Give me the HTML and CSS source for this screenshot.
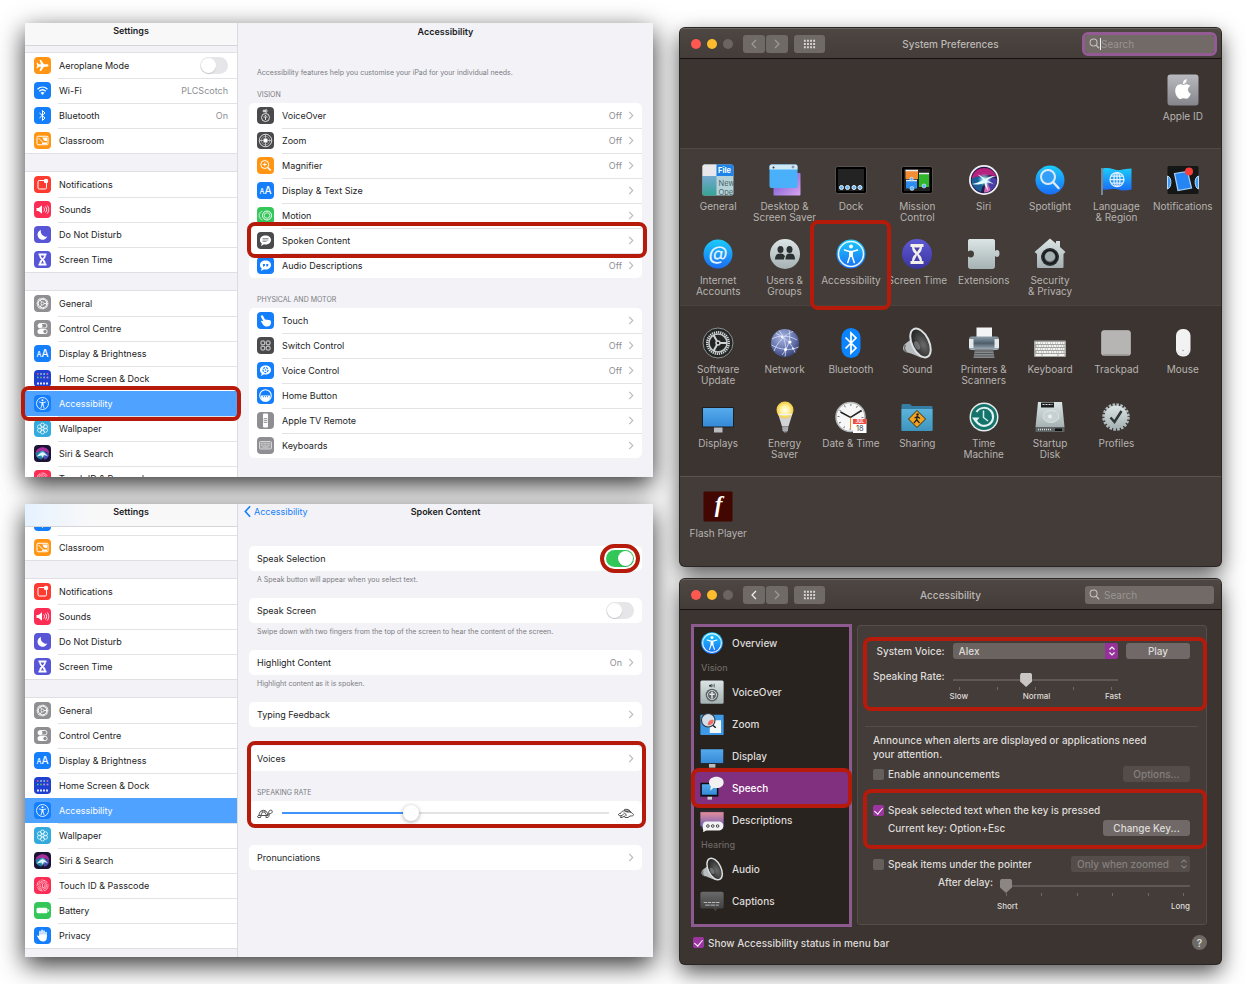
FILE: index.html
```html
<!DOCTYPE html>
<html lang="en">
<head>
    <meta charset="UTF-8">
    <meta name="viewport" content="width=device-width, initial-scale=1.0">
    <title>Spoken Content settings</title>
    <link rel="stylesheet" href="styles.css">
</head>
<body>
    <!-- Icon sprite -->
    <svg class="sprite" aria-hidden="true">
        <defs>
            <linearGradient id="gBlue" x1="0" y1="0" x2="0" y2="1"><stop offset="0" stop-color="#1ccbfb"/><stop offset="1" stop-color="#1a6df5"/></linearGradient>
            <linearGradient id="gSilver" x1="0" y1="0" x2="0" y2="1"><stop offset="0" stop-color="#dce5e6"/><stop offset="1" stop-color="#a5b1b2"/></linearGradient>
            <linearGradient id="gPurple" x1="0" y1="0" x2="0" y2="1"><stop offset="0" stop-color="#5e5ad6"/><stop offset="1" stop-color="#3b349f"/></linearGradient>
            <linearGradient id="gScreen" x1="0" y1="0" x2="0" y2="1"><stop offset="0" stop-color="#56abec"/><stop offset="1" stop-color="#348ad8"/></linearGradient>
            <linearGradient id="gTeal" x1="0" y1="0" x2="0" y2="1"><stop offset="0" stop-color="#74a9d0"/><stop offset="1" stop-color="#38a295"/></linearGradient>
            <linearGradient id="gGrey" x1="0" y1="0" x2="0" y2="1"><stop offset="0" stop-color="#b9babf"/><stop offset="1" stop-color="#85858b"/></linearGradient>
            <linearGradient id="gViolet" x1="0" y1="0" x2="1" y2="1"><stop offset="0" stop-color="#6a4fd0"/><stop offset="1" stop-color="#d9a5ee"/></linearGradient>
            <linearGradient id="gDusk" x1="0" y1="0" x2="0" y2="1"><stop offset="0" stop-color="#e58c9b"/><stop offset="1" stop-color="#6f63b8"/></linearGradient>
            <linearGradient id="gDark" x1="0" y1="0" x2="0" y2="1"><stop offset="0" stop-color="#6a6a6a"/><stop offset="1" stop-color="#3b3b3b"/></linearGradient>
            <linearGradient id="gFolder" x1="0" y1="0" x2="0" y2="1"><stop offset="0" stop-color="#5cb4dc"/><stop offset="1" stop-color="#3e94bd"/></linearGradient>
            <linearGradient id="gPrinter" x1="0" y1="0" x2="0" y2="1"><stop offset="0" stop-color="#8fa0ad"/><stop offset=".5" stop-color="#4e5d6b"/><stop offset="1" stop-color="#a9b6c0"/></linearGradient>
            <radialGradient id="gNet" cx=".4" cy=".3" r=".8"><stop offset="0" stop-color="#a9b6e0"/><stop offset=".6" stop-color="#5f6ea8"/><stop offset="1" stop-color="#2f3865"/></radialGradient>
            <radialGradient id="gCone" cx=".6" cy=".6" r=".7"><stop offset="0" stop-color="#6b6b6b"/><stop offset="1" stop-color="#161616"/></radialGradient>
            <radialGradient id="gBulb"><stop offset="0" stop-color="#fffef0"/><stop offset=".5" stop-color="#fff3a0"/><stop offset="1" stop-color="#f3c93d"/></radialGradient>
            <radialGradient id="gGlow"><stop offset="0" stop-color="#fff"/><stop offset=".4" stop-color="#b5f1fb" stop-opacity=".7"/><stop offset="1" stop-color="#4cc3dd" stop-opacity="0"/></radialGradient>
        </defs>

        <!-- iPad glyphs -->
        <symbol id="plane" viewBox="0 0 34 34"><path fill="#fff" d="M29 17c0-1.600-2-2.400-4-2.400h-5L14 6h-3l3 8.600H9.500L7 11.500H5L6.500 17 5 22.500h2l2.500-3.100H14L11 28h3l6-8.600h5c2 0 4-.8 4-2.400z"/></symbol>
        <symbol id="wifi" viewBox="0 0 34 34"><g fill="none" stroke="#fff" stroke-width="2.500"><path d="M7 14.500c6-5.500 14-5.500 20 0M10.500 18.500c4-3.700 9-3.700 13 0"/></g><path fill="#fff" d="M17 26l-4-4.300c2.300-2 5.700-2 8 0z"/></symbol>
        <symbol id="bt" viewBox="0 0 34 34"><path fill="none" stroke="#fff" stroke-width="2" d="M11 12l11 10-5 5V7l5 5-11 10"/></symbol>
        <symbol id="classroom" viewBox="0 0 34 34"><rect x="6" y="8.500" width="22" height="17" rx="2" fill="none" stroke="#fff" stroke-width="2"/><path d="M9 12l8 8" stroke="#fff" stroke-width="2"/><path d="M17 11h9v7h-4l-3-2zM16 21h10v3H16z" fill="#fff"/></symbol>
        <symbol id="notif" viewBox="0 0 34 34"><path d="M20 9H10.500A2.500 2.500 0 0 0 8 11.500v12a2.500 2.500 0 0 0 2.500 2.500h12a2.500 2.500 0 0 0 2.500-2.500V14" fill="none" stroke="#fff" stroke-width="2"/><circle cx="24" cy="10" r="4.500" fill="#fff"/></symbol>
        <symbol id="sounds" viewBox="0 0 34 34"><path fill="#fff" d="M5 14h4l7-5.500v17L9 20H5z"/><path d="M19.500 13c2 2.500 2 5.500 0 8M23 11c3 4 3 8 0 12M26.500 9c4 5 4 11 0 16" fill="none" stroke="#fff" stroke-width="1.800"/></symbol>
        <symbol id="moon" viewBox="0 0 34 34"><path fill="#fff" d="M14 8a10 10 0 1 0 12.500 13A10.500 10.500 0 0 1 14 8z"/></symbol>
        <symbol id="hourglass" viewBox="0 0 34 34"><path fill="#fff" d="M9 5h16v3.500h-1.500c0 4-1.500 6.500-4.500 8.500 3 2 4.500 4.500 4.500 8.500H25V29H9v-3.500h1.500c0-4 1.500-6.500 4.500-8.500-3-2-4.500-4.500-4.500-8.500H9z"/><path fill="#5856d6" d="M13.500 9h7c-.5 2.500-1.500 4-3.500 5.500-2-1.500-3-3-3.500-5.500zM17 19l3 6h-6z"/></symbol>
        <symbol id="gear" viewBox="0 0 34 34"><circle cx="17" cy="17" r="10.500" fill="none" stroke="#fff" stroke-width="2.500" stroke-dasharray="1.800 .8"/><circle cx="17" cy="17" r="8.500" fill="none" stroke="#fff" stroke-width="2"/><path d="M17 17h8M17 17l-4.500-7M17 17l-4.500 7" stroke="#fff" stroke-width="1.800"/><circle cx="17" cy="17" r="3" fill="#8e8e93" stroke="#fff" stroke-width="1.500"/></symbol>
        <symbol id="control" viewBox="0 0 34 34"><rect x="8" y="7" width="18" height="9" rx="4.500" fill="none" stroke="#fff" stroke-width="1.800"/><circle cx="12.500" cy="11.500" r="4.500" fill="#fff"/><rect x="7" y="18" width="20" height="10" rx="5" fill="#fff"/><circle cx="22" cy="23" r="3.300" fill="#8e8e93"/></symbol>
        <symbol id="aa" viewBox="0 0 34 34"><text x="5" y="24" fill="#fff" font-family="Inter, sans-serif" font-size="14" font-weight="500">A</text><text x="15" y="24" fill="#fff" font-family="Inter, sans-serif" font-size="20" font-weight="500">A</text></symbol>
        <symbol id="homescreen" viewBox="0 0 34 34"><g fill="none" stroke-width="3" stroke-dasharray="3 3.500"><path d="M6 8h23" stroke="#ff5c6b"/><path d="M12.500 8h14" stroke="#5ad3ff"/><path d="M6 15h23" stroke="#58d26b"/><path d="M19 15h10" stroke="#d57bff"/></g><path d="M6 27h23" stroke="#dfe6ff" stroke-width="4" stroke-dasharray="4 2"/></symbol>
        <symbol id="access" viewBox="0 0 34 34"><circle cx="17" cy="17" r="12" fill="none" stroke="#fff" stroke-width="1.700"/><circle cx="17" cy="10.500" r="2" fill="#fff"/><path d="M10.500 14l4.500 1h4l4.500-1M17 15v5M15.700 16v4L14 25.500M18.300 16v4L20 25.500" stroke="#fff" stroke-width="1.700" fill="none" stroke-linecap="round"/></symbol>
        <symbol id="wallpaper" viewBox="0 0 34 34"><g fill="none" stroke="#e6f8ff" stroke-width="1.700"><circle cx="17" cy="17" r="3"/><circle cx="17" cy="10" r="4"/><circle cx="17" cy="24" r="4"/><circle cx="11" cy="13.500" r="4"/><circle cx="23" cy="13.500" r="4"/><circle cx="11" cy="20.500" r="4"/><circle cx="23" cy="20.500" r="4"/></g></symbol>
        <symbol id="siri" viewBox="0 0 34 34"><rect width="34" height="34" fill="#1b1437"/><path d="M3 17C4 7 15 2 24 6c5 3 7 7 6 12-7-7-16-8-27-1z" fill="#a8309c"/><path d="M3 17c8-6 16-6 20-3l-8 15C8 28 3 23 3 17z" fill="#1f7da3"/><path d="M20 14c6 0 10 3 10 7-2 5-6 8-10 8z" fill="#4450b8"/><circle cx="17" cy="18" r="8" fill="url(#gGlow)"/><path d="M5 24c4-6 8-8 12-9 5 1 8 4 11 8-4-3-7-3-9-3l-1 8-2-7c-4 0-7 1-11 3z" fill="#e2faff"/></symbol>
        <symbol id="finger" viewBox="0 0 34 34"><g fill="none" stroke="#ffc4ce" stroke-width="1.800"><circle cx="17" cy="17" r="11" stroke-dasharray="14 2"/><circle cx="17" cy="17" r="8" stroke-dasharray="11 2"/><circle cx="17" cy="17" r="5" stroke-dasharray="8 1.500"/><path d="M17 14v7"/></g></symbol>
        <symbol id="battery" viewBox="0 0 34 34"><rect x="5" y="11.500" width="22" height="11" rx="3" fill="#fff"/><path d="M29 15v4" stroke="#fff" stroke-width="2.500"/></symbol>
        <symbol id="hand" viewBox="0 0 34 34"><path d="M12 18V9M16 17V6.500M20 17V8M24 19v-8" stroke="#fff" stroke-width="3" stroke-linecap="round"/><path fill="#fff" d="M10.500 15h15v7c0 4-3 7-7 7-5 0-7-2-9.500-6L6 18c1-1.500 3-1 4.500 1z"/></symbol>
        <symbol id="voiceover" viewBox="0 0 34 34"><path d="M12 6h4l3-2v8l-3-2h-4zM21 6v4" fill="#ddd" stroke="#bbb"/><circle cx="17" cy="21" r="8" fill="none" stroke="#ddd" stroke-width="2"/><circle cx="17" cy="17" r="1.500" fill="#ddd"/><path d="M13 20h8M17 20v6" stroke="#ddd" stroke-width="2"/></symbol>
        <symbol id="zoom" viewBox="0 0 34 34"><circle cx="17" cy="17" r="12.500" fill="none" stroke="#ddd" stroke-width="2"/><circle cx="17" cy="17" r="8.500" fill="none" stroke="#aaa" stroke-width="1.500"/><path d="M17 5v8M17 21v8M5 17h8M21 17h8" stroke="#ccc" stroke-width="1.800"/><rect x="13" y="13" width="8" height="8" rx="1" fill="#fff"/></symbol>
        <symbol id="magnifier" viewBox="0 0 34 34"><circle cx="15.500" cy="15" r="8" fill="none" stroke="#fff" stroke-width="2"/><path d="M21.500 21l6 6" stroke="#fff" stroke-width="3"/><path d="M11.500 15h8M15.500 11v8" stroke="#fff" stroke-width="1.800"/></symbol>
        <symbol id="motion" viewBox="0 0 34 34"><g fill="none" stroke="#fff"><circle cx="20" cy="17" r="9" stroke-width="2"/><circle cx="20" cy="17" r="5.500" stroke-width="1.500"/><path d="M11 26c-8-3-8-15 0-18" opacity=".7" stroke-width="1.700"/><path d="M7 25c-6-4-6-12 0-16" opacity=".4" stroke-width="1.500"/></g></symbol>
        <symbol id="spoken" viewBox="0 0 34 34"><path fill="#fff" d="M17 7c6.600 0 11 4 11 9s-4.400 9-11 9c-1 0-2 0-3-.3L8 28l1.500-5.500C7 21 6 19 6 16c0-5 4.400-9 11-9z"/><path d="M11 13h12M11 16h12M11 19h8" stroke="#777" stroke-width="1.500"/></symbol>
        <symbol id="audiodesc" viewBox="0 0 34 34"><path fill="#fff" d="M17 7c6.600 0 11 4 11 9s-4.400 9-11 9c-1 0-2 0-3-.3L8 28l1.500-5.500C7 21 6 19 6 16c0-5 4.400-9 11-9z"/><path d="M12 14h4v3l-2 2h-2zM18.500 14h4v3l-2 2h-2z" fill="#147efb"/></symbol>
        <symbol id="touch" viewBox="0 0 34 34"><path fill="#fff" d="M9 7c2-1 3 .5 4 2.500l3 5.500 8 1c3 .5 4 2 4 5 0 5-3 8-8 8-4 0-6-1-8-4l-4-6c0-2 2-2 4-.5l1 .5-5-9c-.6-1.200-.3-2.500 1-3z"/></symbol>
        <symbol id="switch" viewBox="0 0 34 34"><g fill="none" stroke="#ddd" stroke-width="2"><rect x="8" y="8" width="7.500" height="7.500" rx="1.500"/><rect x="18.500" y="8" width="7.500" height="7.500" rx="1.500"/><rect x="8" y="18.500" width="7.500" height="7.500" rx="1.500"/><rect x="18.500" y="18.500" width="7.500" height="7.500" rx="1.500"/></g></symbol>
        <symbol id="voicecontrol" viewBox="0 0 34 34"><path fill="#fff" d="M17 7c6.600 0 11 4 11 9s-4.400 9-11 9c-1 0-2 0-3-.3L8 28l1.500-5.500C7 21 6 19 6 16c0-5 4.400-9 11-9z"/><circle cx="17" cy="16" r="5" fill="none" stroke="#147efb" stroke-width="2.500" stroke-dasharray="4 2"/><circle cx="17" cy="16" r="1.500" fill="#147efb"/></symbol>
        <symbol id="homebutton" viewBox="0 0 34 34"><circle cx="17" cy="17" r="11.500" fill="none" stroke="#fff" stroke-width="2.200"/><path d="M8 17h18v3a9 9 0 0 1-18 0z" fill="#fff"/><path d="M12 19.500h2M16 19.500h2M20 19.500h2" stroke="#147efb" stroke-width="2"/></symbol>
        <symbol id="remote" viewBox="0 0 34 34"><rect x="12" y="3" width="10" height="28" rx="2" fill="#fff"/><rect x="13.500" y="12" width="7" height="10" fill="#a2a2a6"/><path d="M14 15h6M14 19h6" stroke="#fff" stroke-width="1.500"/></symbol>
        <symbol id="keyboard" viewBox="0 0 34 34"><rect x="5" y="9" width="24" height="15" rx="2" fill="#a2a2a6" stroke="#e2e2e2" stroke-width="1.700"/><path d="M8 13h18M8 16.500h18" stroke="#e2e2e2" stroke-width="1.500" stroke-dasharray="1.800 1"/><path d="M11 20h12" stroke="#e2e2e2" stroke-width="1.500"/></symbol>
        <symbol id="chev" viewBox="0 0 6 10"><path d="M1 1l4 4-4 4" fill="none" stroke="currentColor" stroke-width="1.200"/></symbol>
        <symbol id="turtle" viewBox="0 0 32 20"><g fill="none" stroke="#333" stroke-width="1.700"><path d="M4 14c0-14 17-14 18 0z"/><path d="M8 13l3-6h4l4 6M11 7L9 5M15 7l2-2"/><path d="M22 13c1-3 1-7 3-9 3-2 7 0 5 4-1 2-3 2-5 2-1 5-1 8-5 8h-2v-3M4 14c-3 0-4 3-2 4h5l1-3"/></g></symbol>
        <symbol id="hare" viewBox="0 0 32 20"><g fill="none" stroke="#333" stroke-width="1.700"><path d="M1 12c1-2 2-2 4-2 2-6 10-7 15-3 5-1 9 2 11 5 0 3-3 3-7 3l-4 3h-6l-1-3-5 3H5l2-4c-4 1-6 0-6-2z"/><path d="M20 7c-4 0-8-2-7-5 4-2 8 1 10 5M18 4c-1-3 5-3 8 4M11 9c4 0 6 3 5 6M7 14l4-2"/></g></symbol>

        <!-- System Preferences icons -->
        <symbol id="m-apple" viewBox="0 0 64 64"><rect x="1" y="1" width="62" height="62" rx="6" fill="url(#gGrey)"/><path fill="#fff" d="M44 22c-4-3-8-1-11-.2-4-1.600-8-2-12 .8-7 6-5 18 0 24 4 5.500 7 3 11 2s7 3.500 11-1c2-2.500 4-5 4.500-8-7-3-7.500-13-.5-16zM39 10c-5 1-7.500 5-7 10 5 0 8-5 7-10z"/></symbol>
        <symbol id="m-general" viewBox="0 0 64 64"><rect x="1" y="1" width="62" height="62" rx="4" fill="#b5d2d8"/><rect x="1" y="24" width="28" height="39" fill="url(#gTeal)"/><path d="M5 1h24v23H1V5a4 4 0 0 1 4-4z" fill="#e8e8ec"/><path d="M29 1h30a4 4 0 0 1 4 4v19H29z" fill="#1e83e8"/><g font-family="Inter, sans-serif" font-size="15"><text x="32" y="18" fill="#fff" font-weight="700">File</text><text x="33" y="43" fill="#4d6268">New</text><text x="33" y="62" fill="#4d6268">Ope</text></g></symbol>
        <symbol id="m-desktop" viewBox="0 0 64 64"><rect x="9" y="18" width="54" height="45" rx="2" fill="url(#gViolet)"/><rect x="1" y="1" width="56" height="47" rx="4" fill="#4ab0fa"/><path d="M5 1h48a4 4 0 0 1 4 4v6H1V5a4 4 0 0 1 4-4z" fill="#cfe8f5"/><circle cx="9" cy="7" r="2" fill="#334"/><circle cx="48" cy="6" r="2" fill="none" stroke="#334"/></symbol>
        <symbol id="m-dock" viewBox="0 0 64 64"><rect x="1" y="5" width="62" height="54" rx="4" fill="#000" stroke="#565250" stroke-width="2"/><rect x="6" y="10" width="52" height="44" fill="#232323"/><g fill="#63b4f7" stroke="#e5f3ff" stroke-width="2"><circle cx="13" cy="47" r="4"/><circle cx="25" cy="47" r="4"/><circle cx="38" cy="47" r="4"/><circle cx="50" cy="47" r="4"/></g></symbol>
        <symbol id="m-mission" viewBox="0 0 64 64"><rect x="1" y="5" width="62" height="54" rx="4" fill="#000" stroke="#565250" stroke-width="2"/><rect x="6" y="10" width="52" height="44" fill="#222"/><rect x="9" y="13" width="25" height="17" fill="#f28d33"/><rect x="10" y="33" width="22" height="16" fill="#2d8cf0"/><rect x="36" y="19" width="20" height="27" fill="#2fb62d"/><path d="M9 13h25M10 33h22M36 19h20" stroke="#e9e9e9" stroke-width="3"/><g fill="#63b4f7" stroke="#fff"><circle cx="21" cy="30" r="3.500"/><circle cx="22" cy="49" r="4"/><circle cx="46" cy="44" r="4"/></g></symbol>
        <symbol id="m-siri" viewBox="0 0 64 64"><circle cx="32" cy="32" r="30" fill="#f2f2f4"/><circle cx="32" cy="32" r="26.500" fill="#22194a"/><path d="M8 26C14 4 48 0 57 26 44 20 28 22 8 32z" fill="#b5237f"/><path d="M7 30c12-8 22-6 26 2L26 56C14 52 6 42 7 30z" fill="#1c5f96"/><path d="M34 32c10-8 20-6 24 0-1 12-8 20-16 23z" fill="#4a3fa5"/><path d="M36 32l9 20c-3 4-8 5-13 5z" fill="#d66bb4"/><circle cx="33" cy="32" r="14" fill="url(#gGlow)"/><path d="M8 40c10-2 16-5 23-8-4-5-7-8-12-11 7 2 11 5 15 9 8-5 14-6 22-6-8 2-13 5-18 9 6 2 10 4 14 8-6-3-10-4-15-4 1 7 2 11 4 17-5-6-7-10-8-16-8 3-15 4-25 2z" fill="#dffcff"/></symbol>
        <symbol id="m-spotlight" viewBox="0 0 64 64"><circle cx="32" cy="32" r="29" fill="url(#gBlue)"/><circle cx="28" cy="26" r="14" fill="#329ff9" stroke="#dde9f2" stroke-width="4"/><path d="M38 36l11 12" stroke="#dde9f2" stroke-width="5" stroke-linecap="round"/></symbol>
        <symbol id="m-language" viewBox="0 0 64 64"><path d="M4 8v54" stroke="#8aa0b8" stroke-width="3"/><path d="M6 9c14-4 24 5 34 3 8-2 15-2 23-3v42c-10 2-20 3-27 0-10-3-20 2-30 0z" fill="url(#gBlue)"/><g fill="none" stroke="#e1f0ff" stroke-width="2.500"><circle cx="34" cy="31" r="14"/><ellipse cx="34" cy="31" rx="6" ry="14"/><path d="M34 17v28M20 31h28M22 24h24M22 38h24"/></g></symbol>
        <symbol id="m-notifications" viewBox="0 0 64 64"><rect x="1" y="4" width="62" height="56" rx="3" fill="#151616"/><path d="M1 24c10 3 8 24 0 26zM63 24c-10 3-8 24 0 26z" fill="#3d9bf8" stroke="#b9dcfa" stroke-width="2"/><path d="M15 19l26-4 8 33-27 5z" fill="#2685f4" stroke="#a6cdf3" stroke-width="2.500"/><circle cx="44" cy="15" r="8" fill="#fc3d39"/></symbol>
        <symbol id="m-internet" viewBox="0 0 64 64"><circle cx="32" cy="32" r="29" fill="url(#gBlue)"/><text x="32" y="43" text-anchor="middle" fill="#e4f2ff" font-family="Inter, sans-serif" font-size="38" font-style="italic" font-weight="500">@</text></symbol>
        <symbol id="m-users" viewBox="0 0 64 64"><circle cx="32" cy="32" r="30" fill="url(#gSilver)"/><g fill="#2b3032"><ellipse cx="23" cy="23" rx="6" ry="7"/><ellipse cx="41" cy="23" rx="6" ry="7"/><path d="M12 43c0-9 4-12 11-12 5 0 8 3 9 6-2 2-2 4-2 6zM33 43c0-9 3-12 9-12 7 0 10 3 10 12z"/></g></symbol>
        <symbol id="m-access" viewBox="0 0 64 64"><circle cx="32" cy="32" r="29" fill="url(#gBlue)"/><circle cx="32" cy="32" r="25" fill="none" stroke="#e8f5ff" stroke-width="3"/><circle cx="32" cy="17" r="4" fill="#fff"/><path d="M19 24l10 3h6l10-3M32 27v10M29.500 27v10l-4 12M34.500 27v10l4 12" fill="none" stroke="#fff" stroke-width="3" stroke-linecap="round"/></symbol>
        <symbol id="m-screentime" viewBox="0 0 64 64"><circle cx="32" cy="32" r="30" fill="url(#gPurple)"/><path fill="#f1efe8" d="M19 12h26v6h-3c0 7-3 11-7 14 4 3 7 7 7 14h3v6H19v-6h3c0-7 3-11 7-14-4-3-7-7-7-14h-3z"/><path d="M26 19h12l-6 9zM32 34l6 12H26z" fill="#4640ae"/></symbol>
        <symbol id="m-extensions" viewBox="0 0 64 64"><path fill="url(#gSilver)" d="M4 2h46c3 0 4 2 4 4v20c3-3 9-3 9 5s-6 8-9 5v21c0 3-2 5-5 5H5c-3 0-5-2-5-5V37c4 3 12 3 12-5s-8-8-12-5V6c0-3 2-4 4-4z"/></symbol>
        <symbol id="m-security" viewBox="0 0 64 64"><path fill="url(#gSilver)" d="M32 1l12 10V6h8v12l11 10-4 4v26a2 2 0 0 1-2 2H8a2 2 0 0 1-2-2V32l-5-4z"/><circle cx="32" cy="38" r="18" fill="#2b2e30"/><circle cx="32" cy="38" r="13" fill="#555c60" stroke="#17191a" stroke-width="3"/><circle cx="32" cy="37" r="10" fill="#a3aeb1"/></symbol>
        <symbol id="m-software" viewBox="0 0 64 64"><circle cx="32" cy="32" r="30" fill="#242626" stroke="#8b9090" stroke-width="2"/><circle cx="32" cy="32" r="21.500" fill="none" stroke="#d0d4d4" stroke-width="5" stroke-dasharray="2.500 1.700"/><circle cx="32" cy="32" r="18" fill="none" stroke="#bfc4c4" stroke-width="3"/><path d="M32 32h18M32 32l-9-16M32 32l-9 16" stroke="#d0d4d4" stroke-width="4"/><circle cx="32" cy="32" r="4" fill="#242626" stroke="#d0d4d4" stroke-width="3"/></symbol>
        <symbol id="m-network" viewBox="0 0 64 64"><circle cx="32" cy="32" r="28" fill="url(#gNet)"/><g fill="none" stroke="#dfe6ff" stroke-width="1.500"><path d="M6 24c12-8 34-8 50 2M10 48c8-20 24-34 38-39M20 7c12 14 16 34 12 52M5 36c18 10 38 12 54 4M14 13c16 6 32 20 38 38M40 6c4 12 0 34-14 50"/></g><g fill="#fff"><circle cx="26" cy="20" r="2"/><circle cx="42" cy="30" r="3"/><circle cx="33" cy="45" r="3"/><circle cx="48" cy="43" r="2"/></g></symbol>
        <symbol id="m-bluetooth" viewBox="0 0 64 64"><rect x="13" y="2" width="38" height="60" rx="19" fill="#0a84ff"/><path d="M21 21l21 21-10 10V12l10 10-21 21" fill="none" stroke="#fff" stroke-width="3.500"/></symbol>
        <symbol id="m-sound" viewBox="0 0 64 64"><path d="M24 22C14 30 3 34 4 44c2 7 10 7 16 9l22 9z" fill="#b9bdbf"/><path d="M9 36c-3 4-3 11 2 14" stroke="#6e7375" stroke-width="3" fill="none"/><ellipse cx="39" cy="32" rx="17" ry="31" transform="rotate(-26 39 32)" fill="url(#gCone)" stroke="#dcdedf" stroke-width="4"/><ellipse cx="32" cy="37" rx="5" ry="9" transform="rotate(-26 32 37)" fill="#9aa0a2" opacity=".5"/></symbol>
        <symbol id="m-printer" viewBox="0 0 64 64"><rect x="17" y="1" width="31" height="20" fill="#f3f4f5"/><rect x="2" y="19" width="60" height="27" rx="5" fill="url(#gPrinter)"/><path d="M2 24h9v18H2zM53 24h9v18h-9z" fill="#e3e8eb"/><path d="M14 44h36l3 18H11z" fill="#85898b"/><path d="M14 48h36M13 53h38M12 58h40" stroke="#55595b" stroke-width="2"/></symbol>
        <symbol id="m-keyboard" viewBox="0 0 64 64"><rect x="0" y="27" width="64" height="33" rx="2" fill="#a3a3a2"/><g stroke="#f3f3f2" stroke-width="4"><path d="M3 32h58M5 38h56M3 44h58M5 50h56" stroke-dasharray="4 1"/><path d="M3 56h12M17 56h30M49 56h12"/></g></symbol>
        <symbol id="m-trackpad" viewBox="0 0 64 64"><rect x="3" y="7" width="58" height="50" rx="5" fill="#b6b5b4" stroke="#d0cfce"/><path d="M6 56h52" stroke="#86827f" stroke-width="2"/></symbol>
        <symbol id="m-mouse" viewBox="0 0 64 64"><rect x="18" y="4" width="29" height="55" rx="13" fill="#f2f2f2"/><path d="M20 46c3 12 21 12 25 0" fill="none" stroke="#e2e2e2" stroke-width="2"/><circle cx="32" cy="47" r="1.500" fill="#999"/></symbol>
        <symbol id="m-display" viewBox="0 0 64 64"><path d="M24 50h17v13H24z" fill="#b9bdc0"/><rect x="0" y="12" width="64" height="41" rx="2" fill="#1d1f21"/><rect x="2" y="14" width="60" height="37" fill="url(#gScreen)"/></symbol>
        <symbol id="m-energy" viewBox="0 0 64 64"><path d="M18 25l8 26h13l8-26z" fill="#d2d3d6"/><circle cx="32" cy="18" r="17" fill="url(#gBulb)"/><path d="M19 27h27" stroke="#f1f1f1" stroke-width="3"/><path d="M27 51h11v8l-3 4h-5l-3-4z" fill="#8b8e92"/><path d="M26 54h13M27 58h11" stroke="#d8dadc" stroke-width="1.500"/></symbol>
        <symbol id="m-date" viewBox="0 0 64 64"><circle cx="31" cy="32" r="29" fill="#f7f7f7" stroke="#b4b7b9" stroke-width="3"/><circle cx="31" cy="32" r="24" fill="none" stroke="#555" stroke-width="4" stroke-dasharray="1.500 11"/><path d="M11 22l20 11 22-14" fill="none" stroke="#222" stroke-width="3"/><path d="M31 33v22" stroke="#f58b1f" stroke-width="2"/><rect x="36" y="36" width="27" height="28" fill="#fff"/><rect x="36" y="36" width="27" height="10" fill="#f04a42"/><text x="49.500" y="44" text-anchor="middle" fill="#fff" font-family="Inter, sans-serif" font-size="9" font-weight="700">JUL</text><text x="49.500" y="60" text-anchor="middle" fill="#444" font-family="Inter, sans-serif" font-size="15">18</text></symbol>
        <symbol id="m-sharing" viewBox="0 0 64 64"><path d="M1 9c0-2 1-3 3-3h14l4 4h38c2 0 3 1 3 3v44c0 2-1 3-3 3H4c-2 0-3-1-3-3z" fill="#357fa5"/><path d="M1 16h62v41c0 2-1 3-3 3H4c-2 0-3-1-3-3z" fill="url(#gFolder)"/><path d="M32 19l17 17-17 17-17-17z" fill="#f5a51d" stroke="#3a2b0c" stroke-width="2"/><circle cx="33" cy="27" r="2.500" fill="#222"/><path d="M33 30l-2 8-5 6M31 37l6 7M27 34l6-3 5 4" stroke="#222" stroke-width="2.500" fill="none"/></symbol>
        <symbol id="m-timemachine" viewBox="0 0 64 64"><circle cx="32" cy="32" r="29" fill="#e8eeed"/><circle cx="32" cy="32" r="26" fill="#14746c"/><path d="M15 37a18 18 0 1 0 2-15" fill="none" stroke="#e4f3f1" stroke-width="4"/><path d="M8 33h15l-8 10z" fill="#e4f3f1"/><path d="M31 19v14l9 7" fill="none" stroke="#d3efec" stroke-width="3"/></symbol>
        <symbol id="m-startup" viewBox="0 0 64 64"><path d="M8 2h48l5 50H3z" fill="url(#gSilver)"/><path d="M3 52h58v10H3z" fill="#5d6263"/><path d="M8 57h28" stroke="#d7dcdc" stroke-width="3" stroke-dasharray="2 2"/><path d="M42 55h14v5H42z" fill="#111"/><rect x="14" y="3" width="26" height="10" fill="#1b1c1c"/><path d="M17 7h20" stroke="#e7e7e7" stroke-width="2" stroke-dasharray="4 2"/><ellipse cx="34" cy="31" rx="16" ry="12" fill="#c8d1d2" stroke="#eef2f2"/><circle cx="32" cy="31" r="4" fill="#e9eeee"/></symbol>
        <symbol id="m-profiles" viewBox="0 0 64 64"><circle cx="32" cy="32" r="24.500" fill="none" stroke="#aebabd" stroke-width="6" stroke-dasharray="5.100 2.600"/><circle cx="32" cy="32" r="23" fill="url(#gSilver)"/><path d="M21 33l8 9 14-22" fill="none" stroke="#303538" stroke-width="5"/></symbol>
        <symbol id="m-flash" viewBox="0 0 64 64"><rect x="3" y="1" width="58" height="60" rx="2" fill="#430702"/><text x="33" y="41" text-anchor="middle" fill="#fff" font-family="Liberation Serif, serif" font-style="italic" font-weight="700" font-size="46">f</text></symbol>

        <!-- Accessibility pane icons -->
        <symbol id="m-voiceover" viewBox="0 0 64 64"><rect x="1" y="1" width="62" height="62" rx="4" fill="url(#gSilver)"/><path d="M24 13h3l4-3v10l-4-3h-3z" fill="#333"/><path d="M34 12v6M38 10v10" stroke="#444" stroke-width="2"/><circle cx="32" cy="40" r="17" fill="#5d6465"/><circle cx="32" cy="40" r="12" fill="none" stroke="#d4dadb" stroke-width="2.500"/><circle cx="32" cy="34" r="2.500" fill="#e6ebeb"/><path d="M25 38h14M32 38v11" stroke="#e6ebeb" stroke-width="4"/></symbol>
        <symbol id="m-zoom" viewBox="0 0 64 64"><rect x="1" y="7" width="62" height="54" rx="2" fill="#3c9ae8"/><path d="M26 22h30v34H26z" fill="#f4f7fa"/><circle cx="22" cy="22" r="18" fill="#d3dfe8" stroke="#303438" stroke-width="3"/><path d="M21 35c-1-9 5-15 15-14 1 8-6 15-15 14z" fill="#f26b61"/><path d="M35 36l7 6" stroke="#111" stroke-width="4"/></symbol>
        <symbol id="m-speech" viewBox="0 0 64 64"><path d="M20 54h12v9H20z" fill="#ccd0d3"/><rect x="1" y="18" width="48" height="37" fill="#0c0e10"/><rect x="5" y="22" width="40" height="28" fill="url(#gScreen)"/><path d="M44 2c11 0 19 6 19 15s-8 15-19 15c-3 0-6 0-8-1l-9 8 2-12c-3-3-5-6-5-10 0-9 9-15 20-15z" fill="#f1f1f2"/></symbol>
        <symbol id="m-descriptions" viewBox="0 0 64 64"><rect x="1" y="5" width="62" height="52" fill="#2b2b33"/><rect x="1" y="11" width="62" height="38" fill="url(#gDusk)"/><path d="M17 36h34c15 0 15 24 0 24H18c-4 0-6 4-10 4 2-6-1-7-1-15 0-8 4-13 10-13z" fill="#f3f3f3"/><g fill="none" stroke="#3a3a3a" stroke-width="2.500"><circle cx="21" cy="48" r="3.500"/><circle cx="34" cy="48" r="3.500"/><circle cx="47" cy="48" r="3.500"/></g></symbol>
        <symbol id="m-captions" viewBox="0 0 64 64"><path d="M6 7h52a5 5 0 0 1 5 5v35a5 5 0 0 1-5 5H46l-5 8-5-8H6a5 5 0 0 1-5-5V12a5 5 0 0 1 5-5z" fill="url(#gDark)"/><path d="M10 36h44" stroke="#ddd" stroke-width="2" stroke-dasharray="9 2"/><path d="M14 43h36" stroke="#ddd" stroke-width="2" stroke-dasharray="12 2"/></symbol>

        <symbol id="grid" viewBox="0 0 14 10"><path d="M1 1.500h12M1 5h12M1 8.500h12" stroke="#d9d6d4" stroke-width="2" stroke-dasharray="2 1.330"/></symbol>
        <symbol id="loupe" viewBox="0 0 12 12"><circle cx="5" cy="5" r="3.800" fill="none" stroke="#c8c4c1" stroke-width="1.100"/><path d="M8 8l3 3.200" stroke="#c8c4c1" stroke-width="1.400"/></symbol>
        <symbol id="updown" viewBox="0 0 8 12"><path d="M1.500 4.500L4 2l2.500 2.500M1.500 7.500L4 10l2.500-2.500" fill="none" stroke="currentColor" stroke-width="1.200"/></symbol>
    </svg>

    <main class="board">
        <div class="column tablets">

            <!-- iPad: Settings > Accessibility -->
            <section class="tablet">
                <nav class="side">
                    <h2 class="bar">Settings</h2>
                    <div class="side-list">
                        <ul class="group">
                            <li class="row"><svg class="tile orange"><use href="#plane"/></svg><label class="name" for="aeroplane">Aeroplane Mode</label><input class="toggle" type="checkbox" id="aeroplane"></li>
                            <li><a class="row" href="#"><svg class="tile blue"><use href="#wifi"/></svg><span class="name">Wi-Fi</span><span class="value">PLCScotch</span></a></li>
                            <li><a class="row" href="#"><svg class="tile blue"><use href="#bt"/></svg><span class="name">Bluetooth</span><span class="value">On</span></a></li>
                            <li><a class="row" href="#"><svg class="tile orange"><use href="#classroom"/></svg><span class="name">Classroom</span></a></li>
                        </ul>
                        <ul class="group">
                            <li><a class="row" href="#"><svg class="tile red"><use href="#notif"/></svg><span class="name">Notifications</span></a></li>
                            <li><a class="row" href="#"><svg class="tile pink"><use href="#sounds"/></svg><span class="name">Sounds</span></a></li>
                            <li><a class="row" href="#"><svg class="tile indigo"><use href="#moon"/></svg><span class="name">Do Not Disturb</span></a></li>
                            <li><a class="row" href="#"><svg class="tile indigo"><use href="#hourglass"/></svg><span class="name">Screen Time</span></a></li>
                        </ul>
                        <ul class="group">
                            <li><a class="row" href="#"><svg class="tile grey"><use href="#gear"/></svg><span class="name">General</span></a></li>
                            <li><a class="row" href="#"><svg class="tile grey"><use href="#control"/></svg><span class="name">Control Centre</span></a></li>
                            <li><a class="row" href="#"><svg class="tile blue"><use href="#aa"/></svg><span class="name">Display &amp; Brightness</span></a></li>
                            <li><a class="row" href="#"><svg class="tile navy"><use href="#homescreen"/></svg><span class="name">Home Screen &amp; Dock</span></a></li>
                            <li class="marked mark-side"><a class="row selected" href="#"><svg class="tile blue"><use href="#access"/></svg><span class="name">Accessibility</span></a></li>
                            <li><a class="row" href="#"><svg class="tile cyan"><use href="#wallpaper"/></svg><span class="name">Wallpaper</span></a></li>
                            <li><a class="row" href="#"><svg class="tile"><use href="#siri"/></svg><span class="name">Siri &amp; Search</span></a></li>
                            <li><a class="row" href="#"><svg class="tile pink"><use href="#finger"/></svg><span class="name">Touch ID &amp; Passcode</span></a></li>
                        </ul>
                    </div>
                </nav>
                <div class="pane">
                    <div class="bar pane-bar"><h2>Accessibility</h2></div>
                    <p class="intro">Accessibility features help you customise your iPad for your individual needs.</p>
                    <h3 class="caption">VISION</h3>
                    <ul class="card">
                        <li><a class="row" href="#"><svg class="tile dark"><use href="#voiceover"/></svg><span class="name">VoiceOver</span><span class="value">Off</span><svg class="chev"><use href="#chev"/></svg></a></li>
                        <li><a class="row" href="#"><svg class="tile dark"><use href="#zoom"/></svg><span class="name">Zoom</span><span class="value">Off</span><svg class="chev"><use href="#chev"/></svg></a></li>
                        <li><a class="row" href="#"><svg class="tile orange"><use href="#magnifier"/></svg><span class="name">Magnifier</span><span class="value">Off</span><svg class="chev"><use href="#chev"/></svg></a></li>
                        <li><a class="row" href="#"><svg class="tile blue"><use href="#aa"/></svg><span class="name">Display &amp; Text Size</span><svg class="chev"><use href="#chev"/></svg></a></li>
                        <li><a class="row" href="#"><svg class="tile green"><use href="#motion"/></svg><span class="name">Motion</span><svg class="chev"><use href="#chev"/></svg></a></li>
                        <li class="marked mark-card"><a class="row" href="#"><svg class="tile dark"><use href="#spoken"/></svg><span class="name">Spoken Content</span><svg class="chev"><use href="#chev"/></svg></a></li>
                        <li><a class="row" href="#"><svg class="tile blue"><use href="#audiodesc"/></svg><span class="name">Audio Descriptions</span><span class="value">Off</span><svg class="chev"><use href="#chev"/></svg></a></li>
                    </ul>
                    <h3 class="caption">PHYSICAL AND MOTOR</h3>
                    <ul class="card">
                        <li><a class="row" href="#"><svg class="tile blue"><use href="#touch"/></svg><span class="name">Touch</span><svg class="chev"><use href="#chev"/></svg></a></li>
                        <li><a class="row" href="#"><svg class="tile dark"><use href="#switch"/></svg><span class="name">Switch Control</span><span class="value">Off</span><svg class="chev"><use href="#chev"/></svg></a></li>
                        <li><a class="row" href="#"><svg class="tile blue"><use href="#voicecontrol"/></svg><span class="name">Voice Control</span><span class="value">Off</span><svg class="chev"><use href="#chev"/></svg></a></li>
                        <li><a class="row" href="#"><svg class="tile blue"><use href="#homebutton"/></svg><span class="name">Home Button</span><svg class="chev"><use href="#chev"/></svg></a></li>
                        <li><a class="row" href="#"><svg class="tile grey"><use href="#remote"/></svg><span class="name">Apple TV Remote</span><svg class="chev"><use href="#chev"/></svg></a></li>
                        <li><a class="row" href="#"><svg class="tile grey"><use href="#keyboard"/></svg><span class="name">Keyboards</span><svg class="chev"><use href="#chev"/></svg></a></li>
                    </ul>
                </div>
            </section>

            <!-- iPad: Accessibility > Spoken Content -->
            <section class="tablet">
                <nav class="side">
                    <h2 class="bar tinted">Settings</h2>
                    <div class="side-list scrolled">
                        <ul class="group">
                            <li><a class="row" href="#" aria-label="Bluetooth"><svg class="tile blue"><use href="#bt"/></svg><span class="name"></span></a></li>
                            <li><a class="row" href="#"><svg class="tile orange"><use href="#classroom"/></svg><span class="name">Classroom</span></a></li>
                        </ul>
                        <ul class="group">
                            <li><a class="row" href="#"><svg class="tile red"><use href="#notif"/></svg><span class="name">Notifications</span></a></li>
                            <li><a class="row" href="#"><svg class="tile pink"><use href="#sounds"/></svg><span class="name">Sounds</span></a></li>
                            <li><a class="row" href="#"><svg class="tile indigo"><use href="#moon"/></svg><span class="name">Do Not Disturb</span></a></li>
                            <li><a class="row" href="#"><svg class="tile indigo"><use href="#hourglass"/></svg><span class="name">Screen Time</span></a></li>
                        </ul>
                        <ul class="group">
                            <li><a class="row" href="#"><svg class="tile grey"><use href="#gear"/></svg><span class="name">General</span></a></li>
                            <li><a class="row" href="#"><svg class="tile grey"><use href="#control"/></svg><span class="name">Control Centre</span></a></li>
                            <li><a class="row" href="#"><svg class="tile blue"><use href="#aa"/></svg><span class="name">Display &amp; Brightness</span></a></li>
                            <li><a class="row" href="#"><svg class="tile navy"><use href="#homescreen"/></svg><span class="name">Home Screen &amp; Dock</span></a></li>
                            <li><a class="row selected" href="#"><svg class="tile blue"><use href="#access"/></svg><span class="name">Accessibility</span></a></li>
                            <li><a class="row" href="#"><svg class="tile cyan"><use href="#wallpaper"/></svg><span class="name">Wallpaper</span></a></li>
                            <li><a class="row" href="#"><svg class="tile"><use href="#siri"/></svg><span class="name">Siri &amp; Search</span></a></li>
                            <li><a class="row" href="#"><svg class="tile pink"><use href="#finger"/></svg><span class="name">Touch ID &amp; Passcode</span></a></li>
                            <li><a class="row" href="#"><svg class="tile green"><use href="#battery"/></svg><span class="name">Battery</span></a></li>
                            <li><a class="row" href="#"><svg class="tile blue"><use href="#hand"/></svg><span class="name">Privacy</span></a></li>
                        </ul>
                    </div>
                </nav>
                <div class="pane">
                    <div class="bar pane-bar">
                        <a class="back" href="#"><svg class="back-arrow" viewBox="0 0 8 14"><path d="M7 1L1.500 7 7 13" fill="none" stroke="currentColor" stroke-width="1.800"/></svg>Accessibility</a>
                        <h2>Spoken Content</h2>
                    </div>
                    <div class="options">
                        <div class="card">
                            <div class="row"><label class="name" for="speakSelection">Speak Selection</label><span class="marked mark-toggle"><input class="toggle" type="checkbox" id="speakSelection" checked></span></div>
                        </div>
                        <p class="note">A Speak button will appear when you select text.</p>
                        <div class="card">
                            <div class="row"><label class="name" for="speakScreen">Speak Screen</label><input class="toggle" type="checkbox" id="speakScreen"></div>
                        </div>
                        <p class="note">Swipe down with two fingers from the top of the screen to hear the content of the screen.</p>
                        <div class="card">
                            <a class="row" href="#"><span class="name">Highlight Content</span><span class="value">On</span><svg class="chev"><use href="#chev"/></svg></a>
                        </div>
                        <p class="note">Highlight content as it is spoken.</p>
                        <div class="card">
                            <a class="row" href="#"><span class="name">Typing Feedback</span><svg class="chev"><use href="#chev"/></svg></a>
                        </div>
                        <div class="marked mark-voices">
                            <div class="card">
                                <a class="row" href="#"><span class="name">Voices</span><svg class="chev"><use href="#chev"/></svg></a>
                            </div>
                            <h3 class="caption">SPEAKING RATE</h3>
                            <div class="card">
                                <div class="row rate">
                                    <svg class="animal"><use href="#turtle"/></svg>
                                    <input class="ios-range" type="range" min="0" max="100" value="39" aria-label="Speaking rate">
                                    <svg class="animal"><use href="#hare"/></svg>
                                </div>
                            </div>
                        </div>
                        <div class="card">
                            <a class="row" href="#"><span class="name">Pronunciations</span><svg class="chev"><use href="#chev"/></svg></a>
                        </div>
                    </div>
                </div>
            </section>
        </div>

        <div class="column macs">

            <!-- Mac: System Preferences -->
            <section class="mac">
                <header class="titlebar">
                    <div class="tools">
                        <span class="light close"></span><span class="light mini"></span><span class="light"></span>
                        <div class="arrows">
                            <button type="button" aria-label="Back" disabled><svg class="arrow flip"><use href="#chev"/></svg></button>
                            <button type="button" aria-label="Forward" disabled><svg class="arrow"><use href="#chev"/></svg></button>
                        </div>
                        <button class="all" type="button" aria-label="Show all"><svg><use href="#grid"/></svg></button>
                    </div>
                    <h2>System Preferences</h2>
                    <div class="search focused"><svg><use href="#loupe"/></svg><span class="caret"></span><input type="search" placeholder="Search" aria-label="Search"></div>
                </header>
                <div class="shelf shelf-id">
                    <a class="pref last" href="#"><svg><use href="#m-apple"/></svg><span>Apple ID</span></a>
                </div>
                <div class="shelf shelf-personal light-shelf">
                    <a class="pref" href="#"><svg><use href="#m-general"/></svg><span>General</span></a>
                    <a class="pref" href="#"><svg><use href="#m-desktop"/></svg><span>Desktop &amp;<br>Screen Saver</span></a>
                    <a class="pref" href="#"><svg><use href="#m-dock"/></svg><span>Dock</span></a>
                    <a class="pref" href="#"><svg><use href="#m-mission"/></svg><span>Mission<br>Control</span></a>
                    <a class="pref" href="#"><svg><use href="#m-siri"/></svg><span>Siri</span></a>
                    <a class="pref" href="#"><svg><use href="#m-spotlight"/></svg><span>Spotlight</span></a>
                    <a class="pref" href="#"><svg><use href="#m-language"/></svg><span>Language<br>&amp; Region</span></a>
                    <a class="pref" href="#"><svg><use href="#m-notifications"/></svg><span>Notifications</span></a>
                    <a class="pref" href="#"><svg><use href="#m-internet"/></svg><span>Internet<br>Accounts</span></a>
                    <a class="pref" href="#"><svg><use href="#m-users"/></svg><span>Users &amp;<br>Groups</span></a>
                    <a class="pref marked mark-pref" href="#"><svg><use href="#m-access"/></svg><span>Accessibility</span></a>
                    <a class="pref" href="#"><svg><use href="#m-screentime"/></svg><span>Screen Time</span></a>
                    <a class="pref" href="#"><svg><use href="#m-extensions"/></svg><span>Extensions</span></a>
                    <a class="pref" href="#"><svg><use href="#m-security"/></svg><span>Security<br>&amp; Privacy</span></a>
                </div>
                <div class="shelf shelf-hardware">
                    <a class="pref" href="#"><svg><use href="#m-software"/></svg><span>Software<br>Update</span></a>
                    <a class="pref" href="#"><svg><use href="#m-network"/></svg><span>Network</span></a>
                    <a class="pref" href="#"><svg><use href="#m-bluetooth"/></svg><span>Bluetooth</span></a>
                    <a class="pref" href="#"><svg><use href="#m-sound"/></svg><span>Sound</span></a>
                    <a class="pref" href="#"><svg><use href="#m-printer"/></svg><span>Printers &amp;<br>Scanners</span></a>
                    <a class="pref" href="#"><svg><use href="#m-keyboard"/></svg><span>Keyboard</span></a>
                    <a class="pref" href="#"><svg><use href="#m-trackpad"/></svg><span>Trackpad</span></a>
                    <a class="pref" href="#"><svg><use href="#m-mouse"/></svg><span>Mouse</span></a>
                    <a class="pref" href="#"><svg><use href="#m-display"/></svg><span>Displays</span></a>
                    <a class="pref" href="#"><svg><use href="#m-energy"/></svg><span>Energy<br>Saver</span></a>
                    <a class="pref" href="#"><svg><use href="#m-date"/></svg><span>Date &amp; Time</span></a>
                    <a class="pref" href="#"><svg><use href="#m-sharing"/></svg><span>Sharing</span></a>
                    <a class="pref" href="#"><svg><use href="#m-timemachine"/></svg><span>Time<br>Machine</span></a>
                    <a class="pref" href="#"><svg><use href="#m-startup"/></svg><span>Startup<br>Disk</span></a>
                    <a class="pref" href="#"><svg><use href="#m-profiles"/></svg><span>Profiles</span></a>
                </div>
                <div class="shelf shelf-other light-shelf">
                    <a class="pref" href="#"><svg><use href="#m-flash"/></svg><span>Flash Player</span></a>
                </div>
            </section>

            <!-- Mac: Accessibility > Speech -->
            <section class="mac">
                <header class="titlebar">
                    <div class="tools">
                        <span class="light close"></span><span class="light mini"></span><span class="light"></span>
                        <div class="arrows">
                            <button type="button" aria-label="Back"><svg class="arrow flip"><use href="#chev"/></svg></button>
                            <button type="button" aria-label="Forward" disabled><svg class="arrow"><use href="#chev"/></svg></button>
                        </div>
                        <button class="all" type="button" aria-label="Show all"><svg><use href="#grid"/></svg></button>
                    </div>
                    <h2>Accessibility</h2>
                    <div class="search"><svg><use href="#loupe"/></svg><input type="search" placeholder="Search" aria-label="Search"></div>
                </header>
                <div class="speech">
                    <nav class="topics">
                        <a class="topic" href="#"><svg><use href="#m-access"/></svg>Overview</a>
                        <h3>Vision</h3>
                        <a class="topic" href="#"><svg><use href="#m-voiceover"/></svg>VoiceOver</a>
                        <a class="topic" href="#"><svg><use href="#m-zoom"/></svg>Zoom</a>
                        <a class="topic" href="#"><svg><use href="#m-display"/></svg>Display</a>
                        <a class="topic current marked mark-topic" href="#"><svg><use href="#m-speech"/></svg>Speech</a>
                        <a class="topic" href="#"><svg><use href="#m-descriptions"/></svg>Descriptions</a>
                        <h3>Hearing</h3>
                        <a class="topic" href="#"><svg><use href="#m-sound"/></svg>Audio</a>
                        <a class="topic" href="#"><svg><use href="#m-captions"/></svg>Captions</a>
                    </nav>
                    <form class="settings">
                        <div class="voice marked mark-voice">
                            <label for="voice">System Voice:</label>
                            <span class="select"><select id="voice"><option>Alex</option></select><span class="stepper"><svg><use href="#updown"/></svg></span></span>
                            <button class="push" type="button">Play</button>
                            <label for="rate">Speaking Rate:</label>
                            <div class="slider">
                                <input type="range" id="rate" min="0" max="100" value="44">
                                <div class="ticks"><i></i><i></i><i></i><i></i><i></i></div>
                                <div class="ends"><span>Slow</span><span>Normal</span><span>Fast</span></div>
                            </div>
                        </div>
                        <hr>
                        <p>Announce when alerts are displayed or applications need<br>your attention.</p>
                        <div class="line announce">
                            <input class="check" type="checkbox" id="announce"><label for="announce">Enable announcements</label>
                            <button class="push options-btn" type="button" disabled>Options...</button>
                        </div>
                        <div class="selected-text marked mark-key">
                            <div class="line">
                                <input class="check" type="checkbox" id="speakKey" checked><label for="speakKey">Speak selected text when the key is pressed</label>
                            </div>
                            <div class="line indent">
                                <span>Current key: Option+Esc</span>
                                <button class="push key-btn" type="button">Change Key...</button>
                            </div>
                        </div>
                        <div class="line">
                            <input class="check" type="checkbox" id="pointer"><label for="pointer">Speak items under the pointer</label>
                            <span class="select off"><select aria-label="When to speak" disabled><option>Only when zoomed</option></select><span class="stepper"><svg><use href="#updown"/></svg></span></span>
                        </div>
                        <div class="delay">
                            <label for="delay">After delay:</label>
                            <div class="slider">
                                <input type="range" id="delay" min="0" max="100" value="0" disabled>
                                <div class="ticks"><i></i><i></i><i></i><i></i><i></i><i></i></div>
                                <div class="ends"><span>Short</span><span>Long</span></div>
                            </div>
                        </div>
                    </form>
                </div>
                <footer class="foot line">
                    <input class="check" type="checkbox" id="status" checked><label for="status">Show Accessibility status in menu bar</label>
                    <button class="help" type="button" aria-label="Help">?</button>
                </footer>
            </section>
        </div>
    </main>
</body>
</html>
```

FILE: styles.css
```css
* {
    margin: 0;
    padding: 0;
    box-sizing: border-box;
}

body {
    font-family: Inter, "Liberation Sans", sans-serif;
    font-size: 10px;
    background: #fff;
}

a {
    color: inherit;
    text-decoration: none;
}

ul {
    list-style: none;
}

h2, h3 {
    font-weight: 500;
}

button, input, select {
    font: inherit;
    color: inherit;
    border: none;
}

.sprite {
    position: absolute;
    width: 0;
    height: 0;
}

.board {
    display: grid;
    grid-template-columns: minmax(0, 628fr) minmax(0, 541fr);
    grid-template-rows: minmax(0, 1fr);
    gap: 27px;
    height: 100vh;
    padding: 23px 25px 27px;
}

.column {
    display: flex;
    flex-direction: column;
}

.tablets {
    gap: 27px;
    min-height: 0;
}

.macs {
    gap: 13px;
    padding-top: 5px;
}

/* Red call-out frames */
.marked {
    position: relative;
}

.marked::after {
    content: '';
    position: absolute;
    z-index: 3;
    border: 4px solid #b51a0a;
    border-radius: 8px;
    pointer-events: none;
}

.mark-side::after { inset: -5px -4px; }
.mark-card::after { inset: -6px -5px -5px -2px; }
.mark-voices::after { inset: -5px -4px -2px -2px; }
.mark-pref::after { inset: -18px -7px -13px -8px; }
.mark-topic::after { inset: -4px -3px; }
.mark-voice::after { inset: -6px -17px -10px -10px; }
.mark-key::after { inset: -13px -17px -13px -10px; }
.mark-toggle::after { inset: -6px; border-radius: 15px; }

/* iPad windows */
.tablet {
    flex: 1 1 0;
    min-height: 0;
    display: flex;
    font-size: 9px;
    color: #1c1c1e;
    background: #f2f2f7;
    box-shadow: 0 8px 24px rgba(0, 0, 0, 0.8);
}

.bar {
    flex: none;
    height: 23px;
    padding-bottom: 7px;
    display: flex;
    align-items: center;
    justify-content: center;
    font-size: 9px;
    font-weight: 600;
}

.bar h2 {
    font-size: 9px;
    font-weight: 600;
}

.side {
    flex: none;
    width: 213px;
    display: flex;
    flex-direction: column;
    min-height: 0;
    border-right: 1px solid #dcdce0;
    z-index: 1;
}

.side .bar {
    background: #f8f8f9;
    border-bottom: 1px solid #d6d6da;
}

.side .tinted {
    background: linear-gradient(90deg, #e6f2ff, #f8f8f9 30%);
}

.side-list {
    flex: 1;
    min-height: 0;
    display: flex;
    flex-direction: column;
    gap: 19px;
    padding-top: 7px;
    overflow-x: visible;
    overflow-y: clip;
}

.side-list.scrolled {
    justify-content: flex-end;
    padding: 0 0 9px;
}

.group {
    flex: none;
    background: #fff;
    box-shadow: 0 1px #e0e0e4, 0 -1px #e0e0e4;
}

.row {
    display: flex;
    align-items: center;
    height: 25px;
    padding: 0 8px;
}

.side .row {
    padding: 0 9px;
}

.tile {
    flex: none;
    width: 17px;
    height: 17px;
    margin-right: 8px;
    border-radius: 4px;
}

.orange { background: #ff9512; }
.blue { background: #147efb; }
.red { background: #fd3b31; }
.pink { background: #fc2d55; }
.indigo { background: #5856d6; }
.grey { background: #8e8e93; }
.navy { background: #1f3fd0; }
.cyan { background: #33a9dc; }
.green { background: #33c759; }
.dark { background: #4a4a4c; }

.name {
    flex: 1;
    align-self: stretch;
    display: flex;
    align-items: center;
}

.value {
    color: #8e8e93;
}

.chev {
    width: 6px;
    height: 9px;
    margin-left: 6px;
    color: #b9b9bd;
}

/* hairlines start at the text, not at the icon */
li + li .row, li + li.row {
    background: linear-gradient(#e3e3e6, #e3e3e6) 33px 0 / 100% 1px no-repeat;
}

li + li .row.selected {
    color: #fff;
    background: #4fa2ff;
}

.toggle {
    appearance: none;
    flex: none;
    display: block;
    width: 28px;
    height: 17px;
    padding: 1px;
    border-radius: 9px;
    background: #e6e6e8;
}

.toggle::before {
    content: '';
    display: block;
    width: 15px;
    height: 15px;
    border-radius: 50%;
    background: #fff;
    box-shadow: 0 1px 1px rgba(0, 0, 0, 0.15);
}

.toggle:checked {
    background: #33c759;
}

.toggle:checked::before {
    margin-left: 11px;
}

.pane {
    flex: 1;
    min-width: 0;
    padding: 0 11px;
}

.pane-bar {
    position: relative;
}

.back {
    position: absolute;
    left: -5px;
    display: flex;
    align-items: center;
    gap: 3px;
    font-weight: 400;
    color: #147efb;
}

.back-arrow {
    width: 7px;
    height: 13px;
}

.intro, .note, .caption {
    padding: 0 8px;
    font-size: 7px;
    line-height: 10px;
    color: #7c7c81;
}

.intro {
    margin-top: 22px;
}

.caption {
    font-weight: 400;
    margin-top: 12px;
    padding-bottom: 3px;
}

.card + .caption {
    margin-top: 17px;
    padding-bottom: 3px;
}

.card {
    background: #fff;
    border-radius: 5px;
}

.options {
    padding-top: 19px;
}

.note {
    padding-top: 4px;
    margin-bottom: 13px;
}

.mark-voices {
    margin: 19px 0;
}

.rate {
    gap: 9px;
}

.animal {
    flex: none;
    width: 16px;
    height: 11px;
}

.ios-range {
    appearance: none;
    flex: 1;
    min-width: 0;
    height: 17px;
    background: linear-gradient(90deg, #3f94fb 39%, #e3e3e6 39%) center / 100% 2px no-repeat;
}

.ios-range::-webkit-slider-thumb {
    appearance: none;
    width: 16px;
    height: 16px;
    border-radius: 50%;
    background: #fff;
    box-shadow: 0 1px 4px rgba(0, 0, 0, 0.35);
}

/* Mac windows */
.mac {
    color: #dedbd9;
    background: #3b3431;
    border-radius: 5px;
    box-shadow: 0 0 0 1px #2a2624, 0 8px 22px rgba(0, 0, 0, 0.7);
}

.titlebar {
    display: grid;
    grid-template-columns: 1fr auto 1fr;
    align-items: center;
    height: 31px;
    padding: 0 7px;
    background: linear-gradient(#4d4642, #433c38);
    border-top: 1px solid #6a6461;
    border-bottom: 1px solid #141110;
    border-radius: 5px 5px 0 0;
}

.titlebar h2 {
    font-size: 10px;
    color: #bcb8b5;
}

.tools {
    display: flex;
    align-items: center;
    gap: 6px;
    padding-left: 4px;
}

.light {
    width: 10px;
    height: 10px;
    border-radius: 50%;
    background: #6b6562;
}

.close { background: #fe5850; }
.mini { background: #fdbc2e; }

.arrows {
    display: flex;
    gap: 1px;
    margin-left: 4px;
}

.arrows button, .all {
    display: flex;
    align-items: center;
    justify-content: center;
    width: 22px;
    height: 18px;
    border-radius: 3px;
    background: #706a67;
    color: #f3f1f0;
}

.arrows button:disabled {
    color: #a09b98;
}

.arrow {
    width: 6px;
    height: 10px;
}

.flip {
    transform: rotate(180deg);
}

.all {
    width: 31px;
}

.all svg {
    width: 13px;
    height: 10px;
}

.search {
    justify-self: end;
    display: flex;
    align-items: center;
    width: 129px;
    height: 18px;
    padding: 0 4px;
    border-radius: 3px;
    background: #716a67;
}

.search svg {
    flex: none;
    width: 11px;
    height: 11px;
    margin-right: 4px;
}

.search input {
    width: 100%;
    min-width: 0;
    background: none;
    outline: none;
}

.search input::placeholder {
    color: #9b9592;
}

.focused {
    outline: 3px solid #935b93;
}

.focused svg {
    margin-right: 0;
}

.caret {
    flex: none;
    width: 1px;
    height: 12px;
    background: #f3f1f0;
}

.shelf {
    display: grid;
    grid-template-columns: repeat(8, minmax(0, 1fr));
    row-gap: 15px;
    padding: 0 5px;
}

.shelf-id { padding-top: 15px; padding-bottom: 15px; }
.shelf-personal { padding-top: 15px; padding-bottom: 8px; }
.shelf-hardware { padding-top: 21px; padding-bottom: 16px; }
.shelf-other { padding-top: 14px; padding-bottom: 16px; border-radius: 0 0 5px 5px; }

.light-shelf {
    background: #433c38;
    border-top: 1px solid #4f4844;
}

.shelf-hardware {
    border-top: 1px solid #4a4340;
}

.shelf-hardware + .light-shelf {
    border-top: 1px solid #5a534f;
}

.pref {
    display: flex;
    flex-direction: column;
    align-items: center;
    gap: 5px;
    line-height: 11px;
    text-align: center;
    white-space: nowrap;
    color: #b7b3b0;
}

.pref.last {
    grid-column: 8;
}

.pref svg {
    width: 32px;
    height: 32px;
}

.pref span {
    min-height: 22px;
}

.speech {
    display: flex;
    gap: 5px;
    padding: 14px 14px 0 11px;
}

.topics {
    flex: none;
    width: 161px;
    padding-bottom: 7px;
    border: 3px solid #8c5a8f;
    background: #28231f;
    font-weight: 500;
}

.topics h3 {
    height: 17px;
    padding-left: 7px;
    font-size: 9px;
    line-height: 17px;
    color: #6e6864;
}

.topic {
    display: flex;
    align-items: center;
    gap: 8px;
    height: 32px;
    padding-left: 6px;
}

.topic svg {
    width: 24px;
    height: 24px;
}

.current {
    background: #80307f;
    color: #fff;
}

.settings {
    flex: 1;
    min-width: 0;
    margin: 1px 0 2px;
    padding: 17px 16px 0 15px;
    border: 1px solid #544d49;
    border-radius: 3px;
    background: #433c38;
    font-weight: 500;
}

.voice {
    display: grid;
    grid-template-columns: auto 1fr 64px;
    gap: 9px 8px;
    text-align: right;
    line-height: 16px;
}

.push {
    height: 16px;
    border-radius: 3px;
    background: #706967;
    font-weight: 500;
    line-height: 16px;
    text-align: center;
}

.push:disabled {
    background: #544d4a;
    color: #85807d;
}

.options-btn { width: 67px; }
.key-btn { width: 87px; }

.select {
    position: relative;
    display: flex;
    height: 16px;
}

.select select {
    appearance: none;
    width: 100%;
    padding: 0 16px 0 6px;
    border-radius: 3px;
    background: #6a6360;
    font-weight: 500;
}

.stepper {
    position: absolute;
    right: 0;
    display: flex;
    align-items: center;
    justify-content: center;
    width: 13px;
    height: 16px;
    border-radius: 0 3px 3px 0;
    background: #96309a;
    color: #fff;
    pointer-events: none;
}

.stepper svg {
    width: 8px;
    height: 12px;
}

.off {
    width: 119px;
}

.off select, .off .stepper {
    background: #544d4a;
    color: #85807d;
    opacity: 1;
}

.slider {
    padding-top: 5px;
    min-width: 0;
}

.slider input {
    appearance: none;
    display: block;
    width: 100%;
    height: 14px;
    background: linear-gradient(#5f5854, #5f5854) center / 100% 2px no-repeat;
}

.slider input::-webkit-slider-thumb {
    appearance: none;
    width: 12px;
    height: 14px;
    background: #c9c6c4;
    clip-path: polygon(10% 0, 90% 0, 100% 10%, 100% 60%, 50% 100%, 0 60%, 0 10%);
}

.slider input:disabled::-webkit-slider-thumb {
    background: #8b8683;
}

.ticks {
    display: flex;
    justify-content: space-between;
    padding: 0 6px;
}

.ticks i {
    width: 1px;
    height: 3px;
    background: #6f6865;
}

.ends {
    display: flex;
    justify-content: space-between;
    margin: 1px -3px 0;
    font-size: 8px;
    line-height: 10px;
}

.settings hr {
    height: 1px;
    margin: 25px -8px 6px;
    border: none;
    background: #544d49;
}

.settings p {
    line-height: 14px;
    white-space: nowrap;
}

.line {
    display: flex;
    align-items: center;
    height: 16px;
    font-weight: 500;
}

.line button, .line .select {
    margin-left: auto;
}

.announce {
    margin-top: 5px;
}

.selected-text {
    margin: 20px 0;
}

.indent {
    margin-top: 2px;
    padding-left: 15px;
}

.check {
    appearance: none;
    flex: none;
    display: flex;
    justify-content: center;
    width: 11px;
    height: 11px;
    margin-right: 4px;
    border-radius: 2px;
    background: #66605d;
}

.check:checked {
    background: #9c35a0;
}

.check:checked::before {
    content: '';
    width: 4px;
    height: 7px;
    border: solid #fff;
    border-width: 0 1px 1px 0;
    transform: translateY(1px) rotate(40deg);
}

.delay {
    display: grid;
    grid-template-columns: 120px 1fr;
    gap: 7px;
    margin-top: 2px;
    line-height: 16px;
    text-align: right;
}

.delay .ends {
    margin: 5px 0 0 -3px;
}

.foot {
    height: auto;
    padding: 8px 14px 14px 13px;
}

.help {
    width: 15px;
    height: 15px;
    border-radius: 50%;
    background: #6f6966;
    font-weight: 600;
}
```
